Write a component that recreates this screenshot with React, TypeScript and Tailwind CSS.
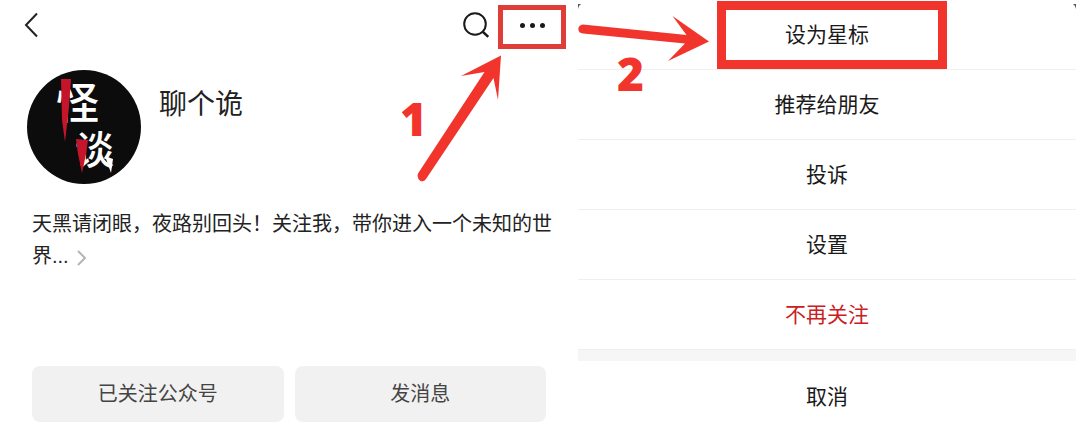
import React from "react";

const menuItems = [
  { label: "设为星标", highlighted: true },
  { label: "推荐给朋友" },
  { label: "投诉" },
  { label: "设置" },
  { label: "不再关注", danger: true },
];

function BackIcon() {
  return (
    <svg width="14" height="26" viewBox="0 0 14 26" fill="none" stroke="#222" strokeWidth="2" aria-hidden="true">
      <path d="M13 1.5 2 13l11 11.5" />
    </svg>
  );
}

function SearchIcon() {
  return (
    <svg width="28" height="28" viewBox="0 0 28 28" fill="none" stroke="#1a1a1a" strokeWidth="2" aria-hidden="true">
      <circle cx="13" cy="13" r="10.8" />
      <path d="m20.5 20.5 5.8 5.3" strokeWidth="2.4" />
    </svg>
  );
}

function Avatar() {
  return (
    <svg
      className="size-[114px] shrink-0"
      viewBox="0 0 114 114"
      role="img"
      aria-label="怪谈"
      fontFamily="'Noto Sans CJK SC', sans-serif"
    >
      <circle cx="57" cy="57" r="57" fill="#0c0c0c" />
      <text x="29" y="49" fontSize="43" fontWeight="500" fill="#fff">怪</text>
      <text x="48" y="94" fontSize="39" fontWeight="500" fill="#fff">谈</text>
      <path d="M78 86l8 3-2 14z" fill="#fff" />
      <path d="M34 9h10l-2 28-4 35-3-22z" fill="#c4152a" />
      <path d="M49 69l12 1-2 14-4 19-4-19z" fill="#c4152a" />
    </svg>
  );
}

function FirstArrow() {
  return (
    <svg width="86" height="128" viewBox="0 0 86 128" fill="#f2352c" aria-hidden="true">
      <path d="M84 1.500 44 22 67.500 18 1 119.500Q-.5 124.500 3.500 127 7 128 9 125L76.500 24 81 46z" />
    </svg>
  );
}

function SecondArrow() {
  return (
    <svg width="132" height="48" viewBox="0 0 132 48" fill="#f2352c" aria-hidden="true">
      <path d="M131 26.500 94.500 1 108.500 20 5 9.500Q.5 10 .300 14 .5 18 5 18.500L107 28.500 90 46z" />
    </svg>
  );
}

export default function App() {
  return (
    <main className="grid grid-cols-[578fr_498fr] overflow-hidden bg-white pr-1 font-['Liberation_Sans','Noto_Sans_CJK_SC',sans-serif] text-[#222]">
      <section className="relative pr-3" aria-label="公众号资料">
        <header className="flex h-[49px] items-end justify-between pl-6">
          <button type="button" aria-label="返回" className="flex h-[49px] items-center">
            <BackIcon />
          </button>
          <div className="flex items-end gap-2">
            <button type="button" aria-label="搜索" className="flex h-[49px] items-center">
              <SearchIcon />
            </button>
            <button
              type="button"
              aria-label="更多"
              className="flex h-11 w-[68px] items-center justify-center gap-[5px] border-[5px] border-[#df3d37] pb-1"
            >
              <span className="size-[5px] rounded-full bg-[#1a1a1a]" />
              <span className="size-[5px] rounded-full bg-[#1a1a1a]" />
              <span className="size-[5px] rounded-full bg-[#1a1a1a]" />
            </button>
          </div>
        </header>

        <div className="mt-[21px] flex items-start gap-[18px] pl-[27px]">
          <Avatar />
          <h1 className="mt-[14px] text-[28px] leading-[42px]">聊个诡</h1>
        </div>

        <p className="mt-6 pl-8 text-[20px] leading-8">
          天黑请闭眼，夜路别回头！关注我，带你进入一个未知的世界...
          <a href="#more" aria-label="展开简介" className="ml-2 inline-block">
            <svg width="10" height="16" viewBox="0 0 10 16" fill="none" stroke="#b5b5b5" strokeWidth="2" className="inline" aria-hidden="true">
              <path d="m1 1 7 7-7 7" />
            </svg>
          </a>
        </p>

        <div className="mt-[94px] grid grid-cols-2 gap-[11px] pr-5 pl-8 text-[20px] text-[#444]">
          <button type="button" className="h-14 rounded-lg bg-[#f1f1f1]">已关注公众号</button>
          <button type="button" className="h-14 rounded-lg bg-[#f1f1f1]">发消息</button>
        </div>

        <div className="pointer-events-none absolute top-[54px] right-[75px]">
          <FirstArrow />
        </div>
        <span className="pointer-events-none absolute top-[95px] right-[151px] font-['Open_Sans',sans-serif] text-[46px] leading-[46px] font-extrabold text-[#f2352c]">
          1
        </span>
      </section>

      <section className="relative" aria-label="操作菜单">
        <ul className="text-[21px] text-[#1a1a1a]">
          {menuItems.map((item) => (
            <li key={item.label} className="relative border-b border-[#efefef]">
              <button
                type="button"
                className={item.danger ? "h-[69px] w-full text-[#c9201f]" : "h-[69px] w-full"}
              >
                {item.label}
              </button>
              {item.highlighted && (
                <span className="pointer-events-none absolute top-px left-[139px] h-[68px] w-[230px] border-[9px] border-[#f2352c]" />
              )}
            </li>
          ))}
        </ul>
        <div className="h-[11px] bg-[#f6f6f6]" />
        <button type="button" className="h-[72px] w-full text-[21px] text-[#1a1a1a]">取消</button>

        <svg className="absolute top-1 left-0" width="4" height="5" viewBox="0 0 4 5" aria-hidden="true">
          <path d="M0 0h3L1 2 0 5z" fill="#555" />
        </svg>
        <svg className="absolute top-1 right-0" width="4" height="5" viewBox="0 0 4 5" aria-hidden="true">
          <path d="M4 0H1l2 2 1 3z" fill="#555" />
        </svg>
        <div className="pointer-events-none absolute top-[15px] left-0">
          <SecondArrow />
        </div>
        <span className="pointer-events-none absolute top-[50px] left-[39px] font-['Open_Sans',sans-serif] text-[46px] leading-[46px] font-extrabold text-[#f2352c]">
          2
        </span>
      </section>
    </main>
  );
}
